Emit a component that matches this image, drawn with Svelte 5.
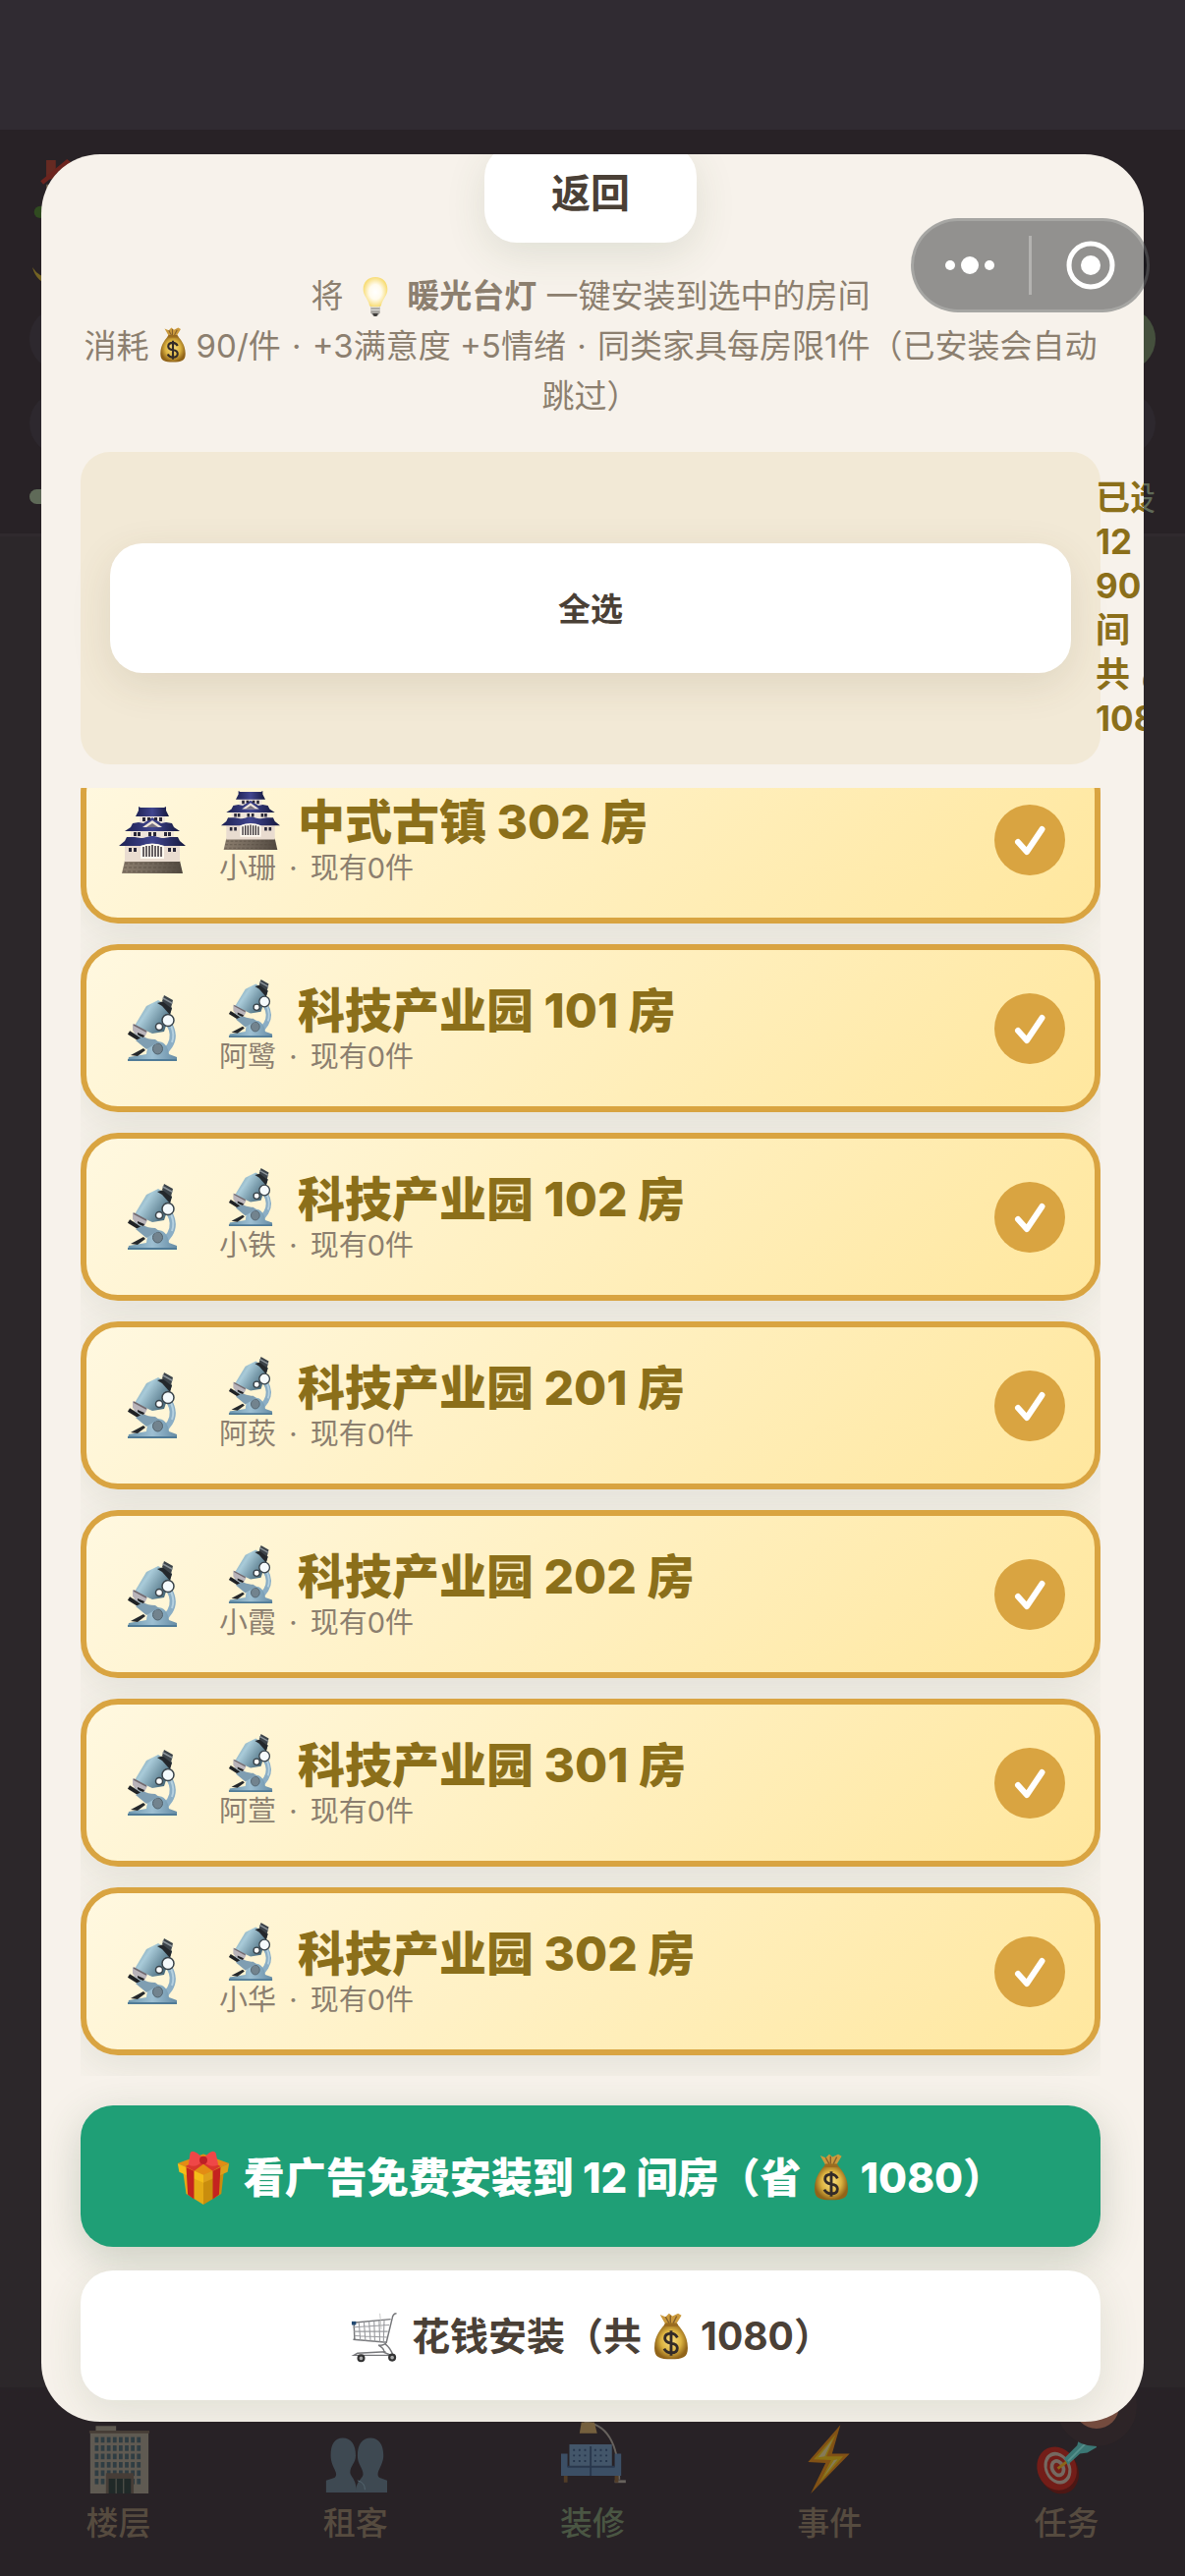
<script>
  const rooms = [
    { icon: 'castle', name: '中式古镇 302 房', tenant: '小珊' },
    { icon: 'scope', name: '科技产业园 101 房', tenant: '阿鹭' },
    { icon: 'scope', name: '科技产业园 102 房', tenant: '小铁' },
    { icon: 'scope', name: '科技产业园 201 房', tenant: '阿莰' },
    { icon: 'scope', name: '科技产业园 202 房', tenant: '小霞' },
    { icon: 'scope', name: '科技产业园 301 房', tenant: '阿萱' },
    { icon: 'scope', name: '科技产业园 302 房', tenant: '小华' }
  ];
  const tabs = [
    { icon: 'building', label: '楼层' },
    { icon: 'people', label: '租客' },
    { icon: 'couch', label: '装修', active: true },
    { icon: 'bolt', label: '事件' },
    { icon: 'target', label: '任务', badge: 2 }
  ];
  const windowCols = [8, 14.5, 21, 27.5, 34, 40.5, 47, 53.5];
</script>

{#snippet icon(name)}
  <svg class="ico" viewBox="0 0 68 68" aria-hidden="true">
    {#if name === 'castle'}
      <defs>
        <linearGradient id="roof" x1="0" x2="1"><stop offset="0" stop-color="#1d2152" /><stop offset=".5" stop-color="#41468f" /><stop offset="1" stop-color="#15183f" /></linearGradient>
        <linearGradient id="stone" x1="0" x2="1"><stop offset="0" stop-color="#8b7d6d" /><stop offset=".5" stop-color="#72675b" /><stop offset="1" stop-color="#51483f" /></linearGradient>
      </defs>
      <path d="M6 55h56l3 13H3z" fill="url(#stone)" />
      <path d="M6 58h54M5 62h57M4 66h60" stroke="#52483d" stroke-width="1" stroke-dasharray="3 2" opacity=".6" />
      <path d="M6 39h56v17H6z" fill="#e9dcd0" />
      <path d="M12 25h44v10H12z" fill="#efe5da" />
      <path d="M21 9h26v9H21z" fill="#efe5da" />
      <path d="M20 0l2 1h24l2-1v4l3 6H17l3-6z" fill="url(#roof)" />
      <path d="M14 17l6-1 5 1 9-6 9 6 5-1 6 1 2 4 6 4H6l6-4z" fill="url(#roof)" />
      <path d="M24 21l10-7 10 7z" fill="#efe5da" /><path d="M28 21l6-4 6 4z" fill="#777181" />
      <path d="M24 11h3v4h-3zM29 11h3v3h-3zM36 11h3v3h-3zM41 11h3v4h-3z" fill="#292738" />
      <path d="M8 31h8l6 1c6 0 7-2 12-2s6 2 12 2l6-1h8l2 4 6 5H46q-12-4-24 0H0l6-5z" fill="url(#roof)" />
      <path d="M15 26h3v4h-3zM19 26h3v4h-3zM30 26h3v4h-3zM35 26h3v4h-3zM46 26h3v4h-3zM50 26h3v4h-3zM10 42h3v4h-3zM15 42h3v4h-3zM50 42h3v4h-3zM55 42h3v4h-3z" fill="#292738" />
      <path d="M22 53V40q12-5 24 0v13z" fill="#fffaf0" />
      <path d="M25 41v10M28 40v11M31 40v11M34 39v12M37 40v11M40 40v11M43 41v10" stroke="#332d33" stroke-width="1.500" />
    {:else if name === 'scope'}
      <defs>
        <linearGradient id="tube" x1="0" x2="1" y2=".6"><stop offset="0" stop-color="#5d8294" /><stop offset=".4" stop-color="#a9cbd9" /><stop offset="1" stop-color="#456779" /></linearGradient>
        <linearGradient id="foot" x1="0" x2="1"><stop offset="0" stop-color="#6d96ad" /><stop offset=".5" stop-color="#9dbfd2" /><stop offset="1" stop-color="#668ca5" /></linearGradient>
      </defs>
      <path d="M51 29q7 12 1 22l-6 8" fill="none" stroke="#8baec5" stroke-width="6" />
      <path d="M53 31q4 9 1 17" fill="none" stroke="#b4d0df" stroke-width="2" />
      <path d="M9 67l1-4 18-3q1-13 11-13 10 0 12 13l8 3v4z" fill="url(#foot)" />
      <path d="M9 66h50" stroke="#507b97" stroke-width="2" />
      <ellipse cx="39.500" cy="54.500" rx="5" ry="5.500" fill="#72838e" stroke="#52636e" />
      <path d="M10 38l21 13" stroke="#202225" stroke-width="4" /><path d="M16 38l11 8" stroke="#8baab7" stroke-width="2" />
      <path d="M12 61l13-7 2 2-8 6z" fill="#25282b" /><path d="M17 46l11 9q6-4 13-7l-4-3q-8 0-12-3z" fill="#7f9eb2" />
      <path d="M40 5l14 8-8 24-12 2-18-8 12-20z" fill="url(#tube)" />
      <path d="M39 8l7-2 8 7-2 7-8-9z" fill="#24282c" />
      <path d="M44 6l2-6 9 5-2 8z" fill="#3c4349" /><path d="M45 3l9 5" stroke="#8b9399" stroke-width="1.500" stroke-linecap="round" />
      <path d="M14 29l15 8-3 6q-8-1-12-7z" fill="#b9b4ba" /><path d="M15 30l13 7" stroke="#70686e" stroke-width="1.500" />
      <path d="M19 38l7 3-1 2q-4-1-6-3z" fill="#202124" />
      <circle cx="50" cy="25.500" r="6" fill="#f5fafc" stroke="#39434a" stroke-width="1.500" />
      <circle cx="41" cy="32" r="3.500" fill="#fff" stroke="#39434a" stroke-width="1.500" />
    {:else if name === 'bag'}
      <defs><radialGradient id="gold"><stop offset="0" stop-color="#fbe082" /><stop offset=".6" stop-color="#dcb341" /><stop offset="1" stop-color="#916419" /></radialGradient></defs>
      <path d="M18 3l8 3 5-5 5 4 8-4 5 3-8 13H26z" fill="#cb9a3d" />
      <path d="M26 6l5 9M33 4v11M42 5l-5 10" stroke="#85602d" stroke-width="2" />
      <path d="M26 15h16c5 8 16 16 16 36 0 14-8 16-24 16s-24-2-24-16c0-20 11-28 16-36z" fill="url(#gold)" />
      <path d="M26 18h16" stroke="#9b6c20" stroke-width="4" stroke-linecap="round" />
      <path d="M43 36q-3-6-9-6-9 0-9 7 0 6 9 7t9 7q0 7-9 7-7 0-10-6M34 26v36" fill="none" stroke="#332b28" stroke-width="4" />
    {:else if name === 'bulb'}
      <defs><radialGradient id="glow"><stop offset="0" stop-color="#fff" /><stop offset=".5" stop-color="#fffbed" /><stop offset="1" stop-color="#f8dd77" /></radialGradient></defs>
      <path d="M26 48h16v14l-5 6h-6l-5-6z" fill="#a7a5a0" />
      <path d="M26 52h16M26 57h16" stroke="#e1e1dd" stroke-width="2" />
      <path d="M29 63h10l-3 5h-4z" fill="#403e3c" />
      <path d="M34 0C21 0 13 9 13 21c0 12 9 17 11 29q10 3 20 0c2-12 11-17 11-29C55 9 47 0 34 0z" fill="url(#glow)" />
    {:else if name === 'gift'}
      <path d="M8 27l26 12v29L12 54z" fill="#e5aa15" /><path d="M60 27L34 39v29l23-14z" fill="#c98d0d" />
      <path d="M1 15l33-12 33 12-33 16z" fill="#e38c14" /><path d="M1 15l33 15v10L3 26z" fill="#f5bd18" /><path d="M67 15L34 30v10l31-14z" fill="#dda01b" />
      <path d="M12 20l10 5v36l-8-6zM56 20l-10 5v36l8-6z" fill="#c4231f" />
      <path d="M11 19l23-12 22 12-10 6-12-9-12 9z" fill="#d9362d" />
      <path d="M34 9Q20-5 17 2l-2 15q9 5 18-5 10 10 20 5L50 2Q46-5 34 9z" fill="#ef4747" /><circle cx="34" cy="11" r="5" fill="#bc2026" />
    {:else if name === 'cart'}
      <path d="M66 1q-5 0-6 7l-8 33q-3 5-11 4M5 14l53-5M6 37l47 4M7 14l1 23M41 45q8 4 8 10l10 4M50 43q8 6 11 16L7 59l5-3 39-2" fill="none" stroke="#77787b" stroke-width="2" />
      <path d="M14 14l2 24M21 13l2 26M28 12l2 27M35 12l1 28M42 11l1 29M49 10l-1 31M6 20l50-3M7 26h47M8 32l45 2" fill="none" stroke="#999a9e" stroke-width="1.500" />
      <path d="M43 1l2 22" stroke="#bbb" /><path d="M4 12h6v5H4z" fill="#234a72" />
      <circle cx="17" cy="63" r="4" fill="#aaa" stroke="#333" stroke-width="3" /><circle cx="60" cy="62" r="4" fill="#aaa" stroke="#333" stroke-width="3" />
    {:else if name === 'building'}
      <path d="M9 -5h22v6H9z" fill="#5f5a51" /><path d="M3 2h63v66H3z" fill="#5f5a52" /><path d="M2 0h65v3H2z" fill="#463d36" />
      {#each [7, 16, 25, 34, 43, 52] as y}
        {#each windowCols as x}
          <rect {x} {y} width="4" height="6" fill="#2f3d43" />
        {/each}
      {/each}
      <path d="M20 46h30v22H20z" fill="#463d37" /><path d="M23 52h24v16H23z" fill="#202928" /><path d="M31 52v16M39 52v16" stroke="#4a4b46" stroke-width="1.500" />
    {:else if name === 'people'}
      <g fill="#3e4952">
        <path d="M20 8c9 0 14 7 14 19 0 8-6 11-6 18 0 5 7 7 7 22H2V54l9-3c6-5-4-11-4-24 0-12 4-19 13-19z" />
        <path d="M50 8c9 0 14 7 14 19 0 11-10 19-4 24l8 3v13H34c0-13 8-15 8-20 0-7-6-10-6-20 0-12 5-19 14-19z" />
      </g>
      <path d="M36 54q8 2 8 10" fill="none" stroke="#536570" />
    {:else if name === 'couch'}
      <g transform="translate(0 -9)">
        <path d="M25 0q36 2 38 62" fill="none" stroke="#67625d" stroke-width="2" /><path d="M58 64h12" stroke="#67625d" stroke-width="3" />
        <path d="M22 0h14l3 12H20z" fill="#75603e" />
        <path d="M9 24h46v26H9z" fill="#43566a" /><path d="M0 34h7v14h51V34h7v24H0z" fill="#3c4f65" /><path d="M7 48h51M32 26v32" stroke="#29384d" stroke-width="2" />
        <path d="M13 30h17M13 36h17M13 42h17M36 30h16M36 36h16M36 42h16" stroke="#25354c" stroke-width="2" stroke-dasharray="2 4" />
        <path d="M5 58v7M60 58v7" stroke="#513c27" stroke-width="4" />
      </g>
    {:else if name === 'bolt'}
      <path d="M46 -6L11 34l19 1L14 68l42-43H37z" fill="#815115" /><path d="M41 4L17 31l19 1L23 57l26-29H31z" fill="#897014" /><path d="M38 9L22 29l7-1zM43 31L28 50l11-18z" fill="#857b58" />
    {:else if name === 'target'}
      <ellipse cx="26" cy="44" rx="21" ry="25" fill="#4c1714" transform="rotate(-25 26 44)" />
      <g transform="rotate(-25 24 41)"><ellipse cx="24" cy="41" rx="21" ry="24" fill="#731d18" /><ellipse cx="25" cy="41" rx="14" ry="18" fill="#756961" /><ellipse cx="25" cy="41" rx="11" ry="14" fill="#731d18" /><ellipse cx="25" cy="41" rx="8" ry="10" fill="#756961" /><ellipse cx="25" cy="41" rx="4" ry="6" fill="#731d18" /></g>
      <path d="M25 41l12-9" stroke="#8a6518" stroke-width="3" /><path d="M32 30l14-14 3-12 5-2 2 9 10 2 1 5-10 6-8 1-13 12z" fill="#3b7774" /><path d="M36 33l22-22" stroke="#57908c" stroke-width="2" />
    {:else if name === 'house'}
      <path d="M8 28h54v30H8z" fill="#6b5c4b" /><path d="M8 0h11v22H8z" fill="#662a22" /><path d="M3 26L32 2l30 24" fill="none" stroke="#6d241e" stroke-width="5" /><circle cx="1" cy="60" r="7" fill="#304b20" />
    {/if}
  </svg>
{/snippet}

<div class="app">
  <header class="top">
    <div class="brand">{@render icon('house')}</div>
    <svg class="moon" viewBox="0 0 24 24" aria-hidden="true"><path d="M0 0q6 10 20 12v6Q4 16 0 0z" fill="#746323" /></svg>
    <div class="pill go"></div>
    <div class="pill"></div>
    <div class="meter"><i></i><span>设</span></div>
  </header>
  <main class="scene"></main>
  <nav class="tabs">
    {#each tabs as tab}
      <a href="#{tab.icon}" class:active={tab.active}>
        {@render icon(tab.icon)}
        <span>{tab.label}</span>
        {#if tab.badge}<b class="badge">{tab.badge}</b>{/if}
      </a>
    {/each}
  </nav>

  <div class="overlay">
    <section class="modal" role="dialog" aria-label="一键安装">
      <button class="btn back">返回</button>
      <p class="desc">
        将 <span class="bulb">{@render icon('bulb')}</span> <b>暖光台灯</b> 一键安装到选中的房间<br />
        消耗<span class="coin">{@render icon('bag')}</span>90/件 <span class="dot">·</span> +3满意度 +5情绪 <span class="dot">·</span> 同类家具每房限1件（已安装会自动<br />
        跳过）
      </p>
      <div class="summary">
        <button class="btn all">全选</button>
        <div class="count">已选<br />12<br />90<br />间<br />共 <span class="coin">{@render icon('bag')}</span><br />1080</div>
      </div>
      <div class="list">
        {#each rooms as room}
          <button class="room" aria-pressed="true">
            <span class="lead">{@render icon(room.icon)}</span>
            <span class="info">
              <span class="name"><span class="mini">{@render icon(room.icon)}</span>{room.name}</span>
              <span class="sub">{room.tenant} <span class="dot">·</span> 现有0件</span>
            </span>
            <svg class="tick" viewBox="0 0 72 72" aria-hidden="true"><circle cx="36" cy="36" r="36" /><path d="M24 38l9 10 15.500-23" /></svg>
          </button>
        {/each}
      </div>
      <div class="actions">
        <button class="btn ad"><span class="gift">{@render icon('gift')}</span>看广告免费安装到 12 间房（省<span class="coin">{@render icon('bag')}</span>1080）</button>
        <button class="btn pay"><span class="cart">{@render icon('cart')}</span>花钱安装（共<span class="coin">{@render icon('bag')}</span>1080）</button>
      </div>
    </section>
  </div>

  <div class="capsule">
    <button aria-label="更多"><svg viewBox="0 0 60 60"><circle cx="10" cy="30" r="5" /><circle cx="30" cy="30" r="9" /><circle cx="50" cy="30" r="5" /></svg></button>
    <i></i>
    <button aria-label="关闭"><svg viewBox="0 0 60 60"><circle cx="30" cy="30" r="22" fill="none" stroke="#fff" stroke-width="5" /><circle cx="30" cy="30" r="10" /></svg></button>
  </div>
</div>

<style>
  :global(body) { margin: 0; background: #2c272a; }
  .app {
    position: relative; min-height: 100vh; display: flex; flex-direction: column;
    overflow: hidden; box-sizing: border-box; padding-top: 132px; background: #302b32;
    font-family: Inter, 'Noto Sans CJK SC', sans-serif; color: #4a4036;
  }
  .app * { box-sizing: border-box; }
  button { font-family: inherit; border: 0; padding: 0; margin: 0; color: inherit; cursor: pointer; }
  .ico { display: block; width: 100%; height: 100%; overflow: visible; }

  .top { height: 414px; padding: 30px 30px 0; background: #282226; border-bottom: 3px solid #302a2e; }
  .brand { width: 70px; height: 62px; padding-left: 10px; }
  .moon { display: block; width: 24px; height: 24px; margin: 48px 0 0 3px; }
  .pill { height: 64px; border-radius: 32px; background: #2d282e; margin-top: 22px; }
  .pill.go { margin-top: 17px; background: linear-gradient(90deg, #2d282e 50%, #45503d 50%); }
  .meter { display: flex; justify-content: space-between; align-items: center; height: 48px; margin-top: 18px; color: #5f6a58; font-size: 33px; }
  .meter i { width: 240px; height: 15px; border-radius: 8px; background: #5f6a58; }
  .scene { flex: 1; background: #2c272a; }
  .tabs { display: flex; height: 192px; background: #282226; }
  .tabs a {
    position: relative; flex: 1; display: flex; flex-direction: column; align-items: center; padding-top: 44px;
    color: #564b3f; font-size: 33px; line-height: 48px; font-weight: 500; text-decoration: none;
  }
  .tabs a.active { color: #4a5643; }
  .tabs .ico { width: 64px; height: 64px; margin-bottom: 6px; }
  .badge {
    position: absolute; top: -4px; left: 53%; width: 46px; height: 46px; border-radius: 50%; text-align: center;
    background: #744b3e; color: #857c76; font-size: 30px; line-height: 46px; box-shadow: 0 0 0 18px #2d2427;
  }

  .overlay { position: absolute; inset: 0; display: flex; padding: 157px 42px; }
  .modal {
    flex: 1; min-width: 0; display: flex; flex-direction: column; align-items: center; overflow: hidden;
    padding: 0 44px 22px 40px; border-radius: 60px; background: #f7f2eb;
  }
  .btn {
    border-radius: 33px; background: #fff; font-weight: 700; padding-bottom: 3px;
    box-shadow: 0 12px 42px rgba(60, 90, 50, .12);
  }
  .back { flex: none; width: 216px; height: 100px; margin-top: -10px; padding-bottom: 6px; font-size: 40px; }
  .desc { margin: 29px 0 31px; font-size: 33px; line-height: 51px; color: #8c7f6f; text-align: center; white-space: nowrap; }
  .coin, .bulb, .gift, .cart { display: inline-block; vertical-align: middle; }
  .coin { width: 36px; height: 36px; margin: -8px 6px 0; }
  .btn .coin { width: 48px; height: 48px; }
  .desc .dot { margin: 0 2px; }
  .sub .dot { margin: 0 5px; }
  .bulb { width: 40px; height: 40px; margin: -4px 3px 0; }
  .summary { align-self: stretch; display: flex; align-items: center; gap: 25px; padding: 24px 30px; border-radius: 30px; background: #f2e9d6; }
  .all { flex: none; width: 100%; height: 132px; font-size: 33px; box-shadow: 0 12px 42px rgba(90, 75, 40, .12); }
  .count { flex: none; width: 0; white-space: nowrap; font-size: 35px; line-height: 45px; font-weight: 700; color: #8b6f1a; }
  .count .coin { margin-left: 0; }

  .list {
    align-self: stretch; flex: 1; min-height: 0; overflow: hidden; margin-top: 24px; padding-bottom: 21px;
    display: flex; flex-direction: column; justify-content: flex-end; gap: 21px;
  }
  .room {
    flex: none; display: flex; align-items: center; height: 171px; padding: 0 30px; text-align: left;
    border: 6px solid #d9a441; border-radius: 38px; background: linear-gradient(135deg, #fff8e0, #ffe79e);
    box-shadow: 0 12px 42px rgba(60, 90, 50, .1);
  }
  .lead { width: 68px; height: 68px; margin: 0 34px 0 3px; }
  .info { flex: 1; display: flex; flex-direction: column; }
  .name { display: flex; align-items: center; height: 59px; font-size: 48px; line-height: 59px; font-weight: 800; color: #8b6f1a; }
  .mini { width: 60px; height: 60px; margin: 0 18px 4px 2px; }
  .sub { font-size: 29px; line-height: 36px; color: #8c7f6f; }
  .tick { width: 72px; height: 72px; }
  .tick circle { fill: #d9a441; }
  .tick path { fill: none; stroke: #fff; stroke-width: 6; stroke-linecap: round; stroke-linejoin: round; }

  .actions { align-self: stretch; display: flex; flex-direction: column; gap: 24px; margin-top: 30px; }
  .ad { height: 144px; font-size: 42px; font-weight: 800; color: #fff; background: #1f9f76; box-shadow: 0 12px 42px rgba(50, 80, 50, .22); }
  .pay { height: 132px; font-size: 39px; }
  .gift { width: 54px; height: 54px; margin: -6px 14px 0 0; }
  .cart { width: 50px; height: 50px; margin: -6px 14px 0 0; }

  .capsule {
    position: absolute; top: 222px; right: 36px; display: flex; align-items: center; justify-content: space-between;
    width: 243px; height: 96px; padding: 0 27px; border-radius: 48px; border: 3px solid rgba(255, 255, 255, .18);
    background: rgba(8, 12, 16, .42);
  }
  .capsule button { width: 60px; height: 60px; background: none; }
  .capsule svg { display: block; fill: #fff; }
  .capsule i { width: 3px; height: 60px; background: rgba(255, 255, 255, .3); }
</style>
